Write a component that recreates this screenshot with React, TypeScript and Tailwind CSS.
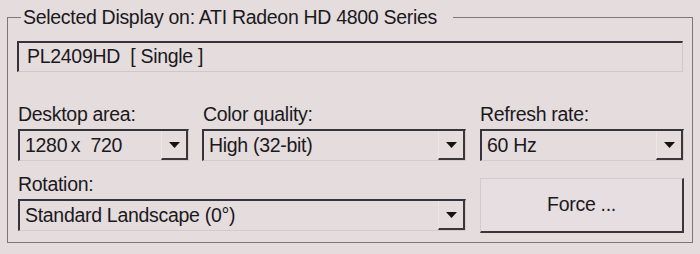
import React from 'react';

const Arrow = () => (
    <svg width="11" height="6" viewBox="0 0 11 6">
        <polygon points="0,0 11,0 5.5,6" fill="#141215" />
    </svg>
);

// combo box: sunken text part + raised arrow button
const Combo = ({ value, className = '' }: { value: string; className?: string }) => (
    <div className={`flex h-[32px] border-t-2 border-l-2 border-[#37333a] border-r border-b border-r-[#d3cbcd] border-b-[#d3cbcd] ${className}`}>
        <div className="flex-1 flex items-center pl-[5px] whitespace-pre">{value}</div>
        <div className="w-[27px] flex items-center justify-center border-r-2 border-b-2 border-[#3a363c] border-l border-l-[#ece6e7]">
            <Arrow />
        </div>
    </div>
);

export default function App() {
    return (
        <div
            className="w-[700px] h-[254px] bg-[#e5dcde] pt-[6px] text-[#1b191c] text-[19.5px] tracking-[-0.3px] overflow-hidden"
            style={{ fontFamily: '"Liberation Sans", Arial, sans-serif' }}
        >
            <fieldset className="ml-[7px] w-[684px] border border-[#7c767b] px-[9px] pt-[13px] pb-[9px]">
                <legend className="ml-[4px] pl-[2px] pr-[16px] leading-[22px]">
                    Selected Display on: ATI Radeon HD 4800 Series
                </legend>

                {/* display name box */}
                <div className="w-[666px] h-[31px] flex items-center pl-[8px] border-t-2 border-l-2 border-[#34313a] border-r border-b border-r-[#cfc7c9] border-b-[#cfc7c9] whitespace-pre">
                    PL2409HD  [ Single ]
                </div>

                <div className="mt-[31px] grid grid-cols-[171px_264px_203px] gap-x-[14px]">
                    <div className="leading-[22px] pl-[1px]">Desktop area:</div>
                    <div className="leading-[22px] pl-[1px]">Color quality:</div>
                    <div className="leading-[22px]">Refresh rate:</div>

                    <Combo value={'1280\u2009x  720'} className="mt-[4px] ml-[1px] -mr-[1px]" />
                    <Combo value="High (32-bit)" className="mt-[4px]" />
                    <Combo value="60 Hz" className="mt-[4px] -mr-[1px]" />

                    <div className="col-span-2 mt-[12px]">
                        <div className="leading-[22px] pl-[1px]">Rotation:</div>
                        <Combo value="Standard Landscape (0°)" className="mt-[4px] ml-[1px]" />
                    </div>
                    <button className="mt-[17px] h-[55px] w-[204px] border-t border-l border-[#d2cacc] border-r-2 border-b-2 border-r-[#3a363c] border-b-[#3a363c] bg-[#e6dee0]">
                        Force ...
                    </button>
                </div>
            </fieldset>
        </div>
    );
}
